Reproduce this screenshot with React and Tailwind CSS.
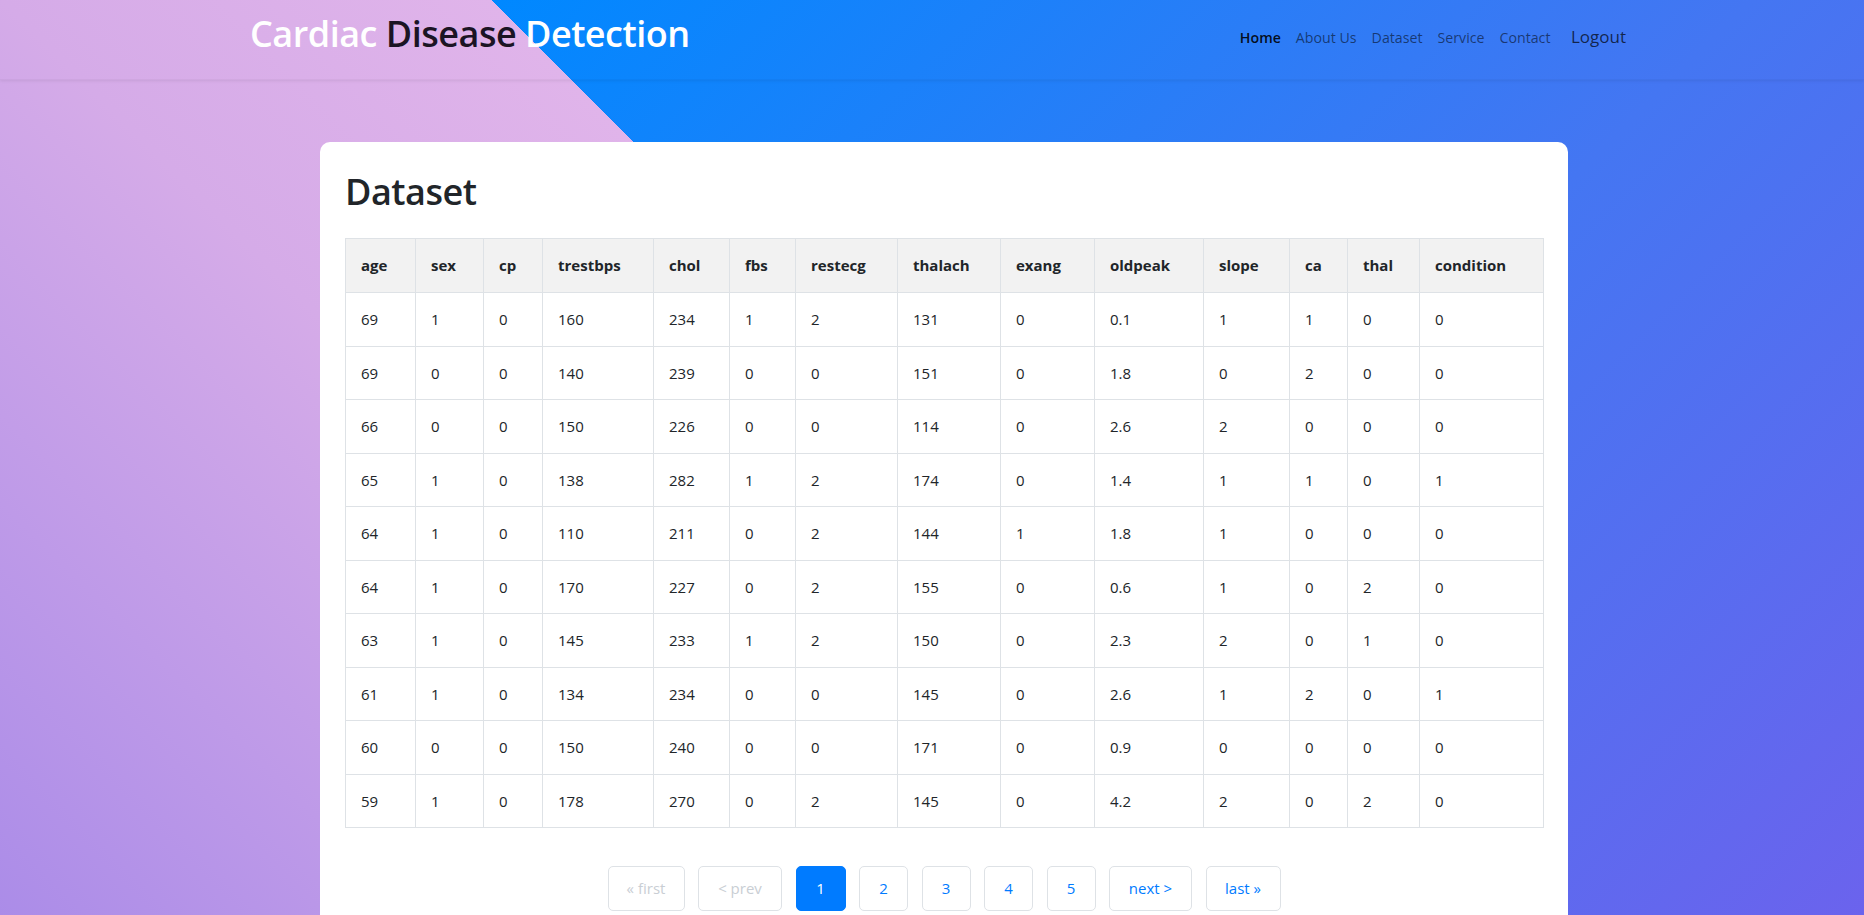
const columns = [
  { key: "age", w: "w-[70px]" },
  { key: "sex", w: "w-[68px]" },
  { key: "cp", w: "w-[59px]" },
  { key: "trestbps", w: "w-[111px]" },
  { key: "chol", w: "w-[76px]" },
  { key: "fbs", w: "w-[66px]" },
  { key: "restecg", w: "w-[102px]" },
  { key: "thalach", w: "w-[103px]" },
  { key: "exang", w: "w-[94px]" },
  { key: "oldpeak", w: "w-[109px]" },
  { key: "slope", w: "w-[86px]" },
  { key: "ca", w: "w-[58px]" },
  { key: "thal", w: "w-[72px]" },
  { key: "condition", w: "w-[124px]" },
];

const rows = [
  [69, 1, 0, 160, 234, 1, 2, 131, 0, "0.1", 1, 1, 0, 0],
  [69, 0, 0, 140, 239, 0, 0, 151, 0, "1.8", 0, 2, 0, 0],
  [66, 0, 0, 150, 226, 0, 0, 114, 0, "2.6", 2, 0, 0, 0],
  [65, 1, 0, 138, 282, 1, 2, 174, 0, "1.4", 1, 1, 0, 1],
  [64, 1, 0, 110, 211, 0, 2, 144, 1, "1.8", 1, 0, 0, 0],
  [64, 1, 0, 170, 227, 0, 2, 155, 0, "0.6", 1, 0, 2, 0],
  [63, 1, 0, 145, 233, 1, 2, 150, 0, "2.3", 2, 0, 1, 0],
  [61, 1, 0, 134, 234, 0, 0, 145, 0, "2.6", 1, 2, 0, 1],
  [60, 0, 0, 150, 240, 0, 0, 171, 0, "0.9", 0, 0, 0, 0],
  [59, 1, 0, 178, 270, 0, 2, 145, 0, "4.2", 2, 0, 2, 0],
];

const pages = [
  { label: "« first", w: "w-[77px]", state: "disabled" },
  { label: "< prev", w: "w-[84px]", state: "disabled" },
  { label: "1", w: "w-[50px]", state: "active" },
  { label: "2", w: "w-[49px]" },
  { label: "3", w: "w-[49px]" },
  { label: "4", w: "w-[49px]" },
  { label: "5", w: "w-[49px]" },
  { label: "next >", w: "w-[83px]" },
  { label: "last »", w: "w-[75px]" },
];

function Navbar() {
  return (
    <header className="h-[80px] shadow-[0_1px_3px_rgba(0,0,0,0.08)] border-b border-black/[0.03]">
      <div className="ml-[250px] w-[1376px] flex items-start justify-between">
        <h1 className="mt-[11px] text-[36px] leading-[46px] tracking-[-0.5px] font-semibold text-white">
          Cardiac <span className="text-[#1b1424]">Disease</span> Detection
        </h1>
        <nav className="mt-[25px] flex items-baseline">
          <a className="px-[7.5px] text-[14.2px] leading-6 font-semibold text-black/90">Home</a>
          <a className="px-[7.5px] text-[14.2px] leading-6 text-black/55">About Us</a>
          <a className="px-[7.5px] text-[14.2px] leading-6 text-black/55">Dataset</a>
          <a className="px-[7.5px] text-[14.2px] leading-6 text-black/55">Service</a>
          <a className="px-[7.5px] text-[14.2px] leading-6 text-black/55">Contact</a>
          <a className="ml-[13px] text-[17px] leading-6 text-black/70">Logout</a>
        </nav>
      </div>
    </header>
  );
}

export default function App() {
  return (
    <div className="h-[915px] w-full overflow-hidden font-['Open_Sans',sans-serif] [background-image:linear-gradient(45deg,#ab8ce8_0%,#d5abe8_33%,#e0b4ea_50.6%,transparent_50.6%),linear-gradient(135deg,#0088ff_18%,#4476f2_63%,#6b63ed_100%)]">
      <Navbar />

      <main className="ml-[320px] mt-[62px] w-[1248px] h-[800px] rounded-t-[10px] bg-white px-[25px] pt-[27px]">
        <h2 className="text-[36px] leading-[46px] tracking-[-0.5px] font-semibold text-[#212529]">Dataset</h2>

        <table className="mt-[23px] w-[1198px] table-fixed border-collapse text-[15px] text-[#212529]">
          <thead className="bg-[#f2f2f2]">
            <tr>
              {columns.map((c) => (
                <th
                  key={c.key}
                  className={`${c.w} h-[54px] border border-[#dee2e6] px-[15px] text-left font-bold`}
                >
                  {c.key}
                </th>
              ))}
            </tr>
          </thead>
          <tbody>
            {rows.map((r, i) => (
              <tr key={i}>
                {r.map((v, j) => (
                  <td key={j} className="h-[53.5px] border border-[#dee2e6] px-[15px]">
                    {v}
                  </td>
                ))}
              </tr>
            ))}
          </tbody>
        </table>

        <div className="mt-[38px] flex justify-center gap-[13.5px]">
          {pages.map((p) => (
            <button
              key={p.label}
              className={`${p.w} h-[45px] rounded-[5px] border text-[15px] ${
                p.state === "active"
                  ? "border-[#007bff] bg-[#007bff] text-white"
                  : p.state === "disabled"
                  ? "border-[#dee2e6] bg-white text-[#c9ced4]"
                  : "border-[#dee2e6] bg-white text-[#007bff]"
              }`}
            >
              {p.label}
            </button>
          ))}
        </div>
      </main>
    </div>
  );
}
